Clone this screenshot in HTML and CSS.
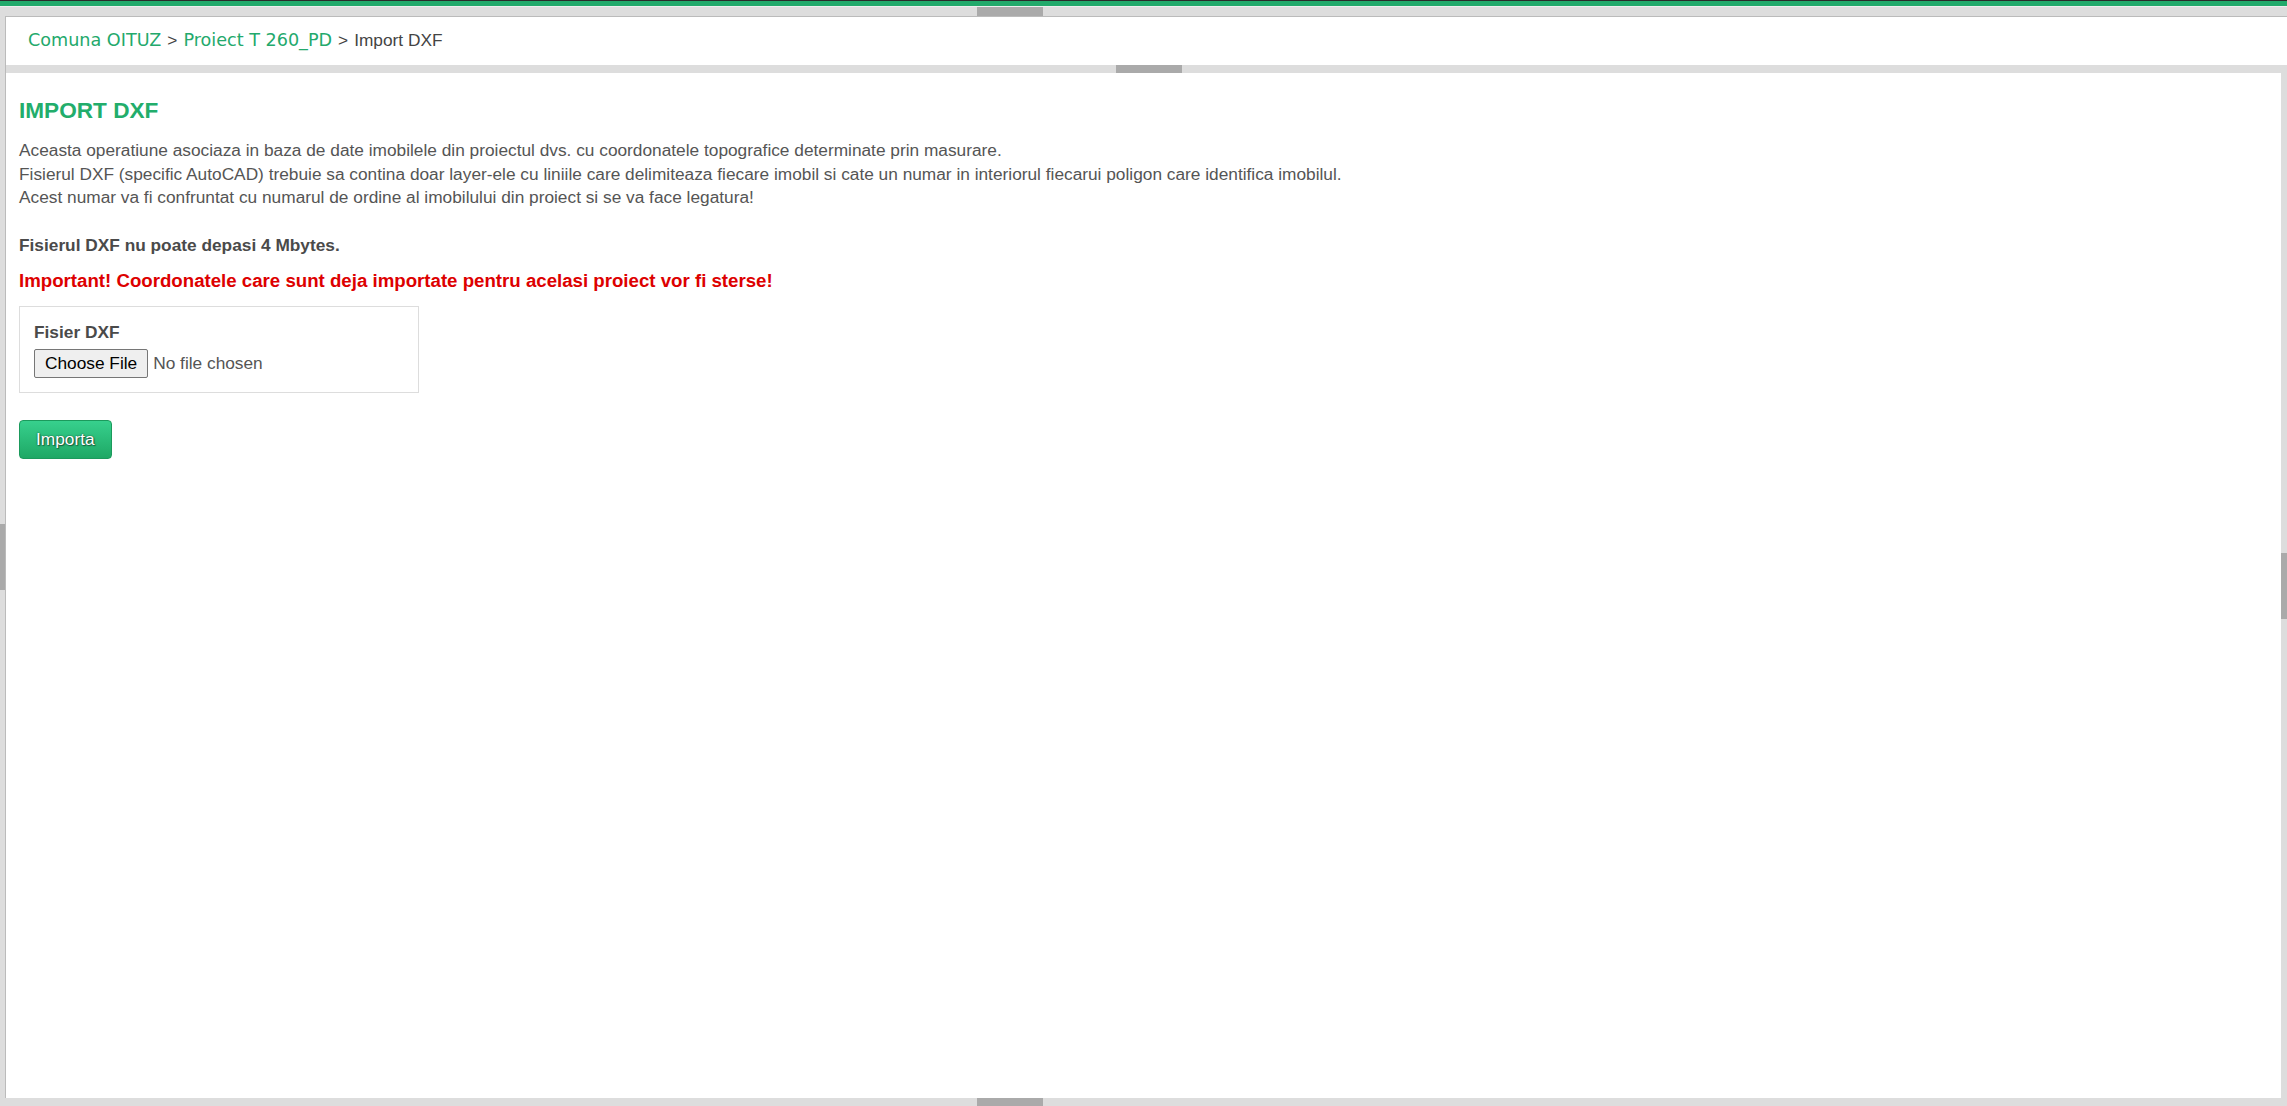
FILE: index.html
```html
<!DOCTYPE html>
<html lang="ro">
<head>
    <meta charset="UTF-8">
    <title>Import DXF</title>
    <link rel="stylesheet" href="styles.css">
</head>
<body>
    <div class="topbar"></div>
    <div class="hsplit top"><span class="grip"></span></div>

    <div class="workspace">
        <div class="vsplit left"><span class="grip"></span></div>
        <div class="frame">
            <div class="crumbs">
                <a href="#">Comuna OITUZ</a>
                <span class="sep">&gt;</span>
                <a href="#">Proiect T 260_PD</a>
                <span class="sep">&gt;</span>
                <span class="current">Import DXF</span>
            </div>
            <div class="hsplit mid"><span class="grip"></span></div>
            <div class="panes">
                <div class="content">
                    <h4 class="title">IMPORT DXF</h4>
                    <p class="info">
                        Aceasta operatiune asociaza in baza de date imobilele din proiectul dvs. cu coordonatele topografice determinate prin masurare.<br>
                        Fisierul DXF (specific AutoCAD) trebuie sa contina doar layer-ele cu liniile care delimiteaza fiecare imobil si cate un numar in interiorul fiecarui poligon care identifica imobilul.<br>
                        Acest numar va fi confruntat cu numarul de ordine al imobilului din proiect si se va face legatura!<br>
                        <br>
                        <b>Fisierul DXF nu poate depasi 4 Mbytes.</b>
                    </p>
                    <h4 class="warning">Important! Coordonatele care sunt deja importate pentru acelasi proiect vor fi sterse!</h4>

                    <form class="upload">
                        <div class="file-box">
                            <label for="dxf">Fisier DXF</label>
                            <input type="file" id="dxf" name="dxf">
                        </div>
                        <button type="button" class="btn-import">Importa</button>
                    </form>
                </div>
                <div class="vsplit right"><span class="grip"></span></div>
            </div>
        </div>
    </div>

    <div class="hsplit bottom"><span class="grip"></span></div>
</body>
</html>
```

FILE: styles.css
```css
html, body {
    margin: 0;
    height: 100%;
}

body {
    background: #dddddd;
    font-family: 'Liberation Sans', Arial, sans-serif;
    font-size: 17.3px;
    line-height: 23.7px;
    color: #555555;
    overflow: hidden;
}

.topbar {
    height: 5px;
    background: #22aa6b;
    border-top: 1px solid #2b2b2b;
    border-bottom: 1px solid #eeeeee;
}

/* splitter bars */
.hsplit {
    background: #dddddd;
    display: flex;
}

.hsplit .grip {
    display: block;
    width: 66px;
    background: #aaaaaa;
}

.hsplit.top {
    height: 9px;
}

.hsplit.top .grip,
.hsplit.bottom .grip {
    margin-left: 977px;
}

.hsplit.mid {
    height: 8px;
}

.hsplit.mid .grip {
    margin-left: 1110px;
}

.hsplit.bottom {
    height: 8px;
}

.vsplit {
    background: #dddddd;
    display: flex;
    align-items: center;
}

.vsplit .grip {
    display: block;
    width: 100%;
    height: 66px;
    background: #aaaaaa;
}

.vsplit.left {
    width: 5px;
}

.vsplit.right {
    width: 6px;
}

.workspace {
    display: flex;
    height: 1082px;
}

.frame {
    flex: 1;
    display: flex;
    flex-direction: column;
    border-top: 1px solid #bbbbbb;
    border-left: 1px solid #bbbbbb;
}

/* breadcrumb */
.crumbs {
    height: 48px;
    background: #ffffff;
    display: flex;
    align-items: center;
    gap: 6px;
    padding-left: 22px;
    font-size: 17.3px;
    color: #444444;
}

.crumbs a {
    font-family: 'DejaVu Sans', Verdana, sans-serif;
    font-size: 17.6px;
    color: #23a96c;
    text-decoration: none;
}

.panes {
    flex: 1;
    display: flex;
}

.content {
    flex: 1;
    background: #ffffff;
    padding: 0 13px;
}

.title {
    margin: 26px 0 17px;
    font-size: 22.6px;
    line-height: 23px;
    color: #22ad6b;
}

.info {
    margin: 0 0 11px;
}

.info b {
    color: #4a4a4a;
}

.warning {
    margin: 0 0 14px;
    font-size: 18.67px;
    line-height: 23px;
    color: #dd0000;
}

.file-box {
    width: 372px;
    border: 1px solid #dddddd;
    padding: 14px 12px 14px 14px;
}

.file-box label {
    display: block;
    font-weight: bold;
    color: #4a4a4a;
    margin-bottom: 5px;
}

.file-box input {
    display: block;
    font-family: 'Liberation Sans', Arial, sans-serif;
    font-size: 17.3px;
    color: #555555;
}

.file-box input::file-selector-button {
    font-family: 'Liberation Sans', Arial, sans-serif;
    font-size: 17.3px;
    color: #000000;
    background: #efefef;
    border: 1px solid #767676;
    border-radius: 2px;
    padding: 3px 10px;
    margin-right: 5px;
}

.btn-import {
    margin-top: 27px;
    height: 39px;
    padding: 0 16px;
    font-family: 'Liberation Sans', Arial, sans-serif;
    font-size: 17.3px;
    color: #ffffff;
    text-shadow: 0 0 2px rgba(0, 0, 0, 0.6), 1px 1px 1px rgba(0, 0, 0, 0.4);
    background: linear-gradient(to bottom, #37d08d, #1ea865);
    border: 1px solid #1b9a5c;
    border-radius: 4px;
    cursor: pointer;
}
```
